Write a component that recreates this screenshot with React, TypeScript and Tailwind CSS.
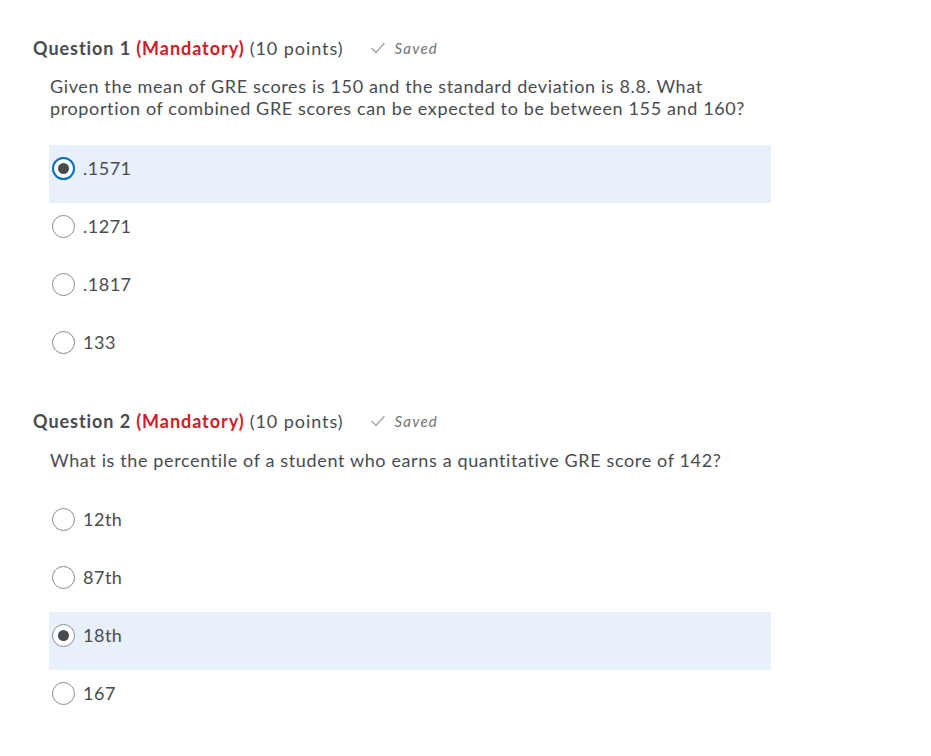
import React from 'react';

type Option = { label: string; selected?: boolean; focused?: boolean };

type Question = {
  number: number;
  points: number;
  text: string;
  options: Option[];
};

const questions: Question[] = [
  {
    number: 1,
    points: 10,
    text: 'Given the mean of GRE scores is 150 and the standard deviation is 8.8. What proportion of combined GRE scores can be expected to be between 155 and 160?',
    options: [{ label: '.1571', selected: true, focused: true }, { label: '.1271' }, { label: '.1817' }, { label: '133' }],
  },
  {
    number: 2,
    points: 10,
    text: 'What is the percentile of a student who earns a quantitative GRE score of 142?',
    options: [{ label: '12th' }, { label: '87th' }, { label: '18th', selected: true }, { label: '167' }],
  },
];

function Check() {
  return (
    <svg width="16" height="14" viewBox="0 0 16 14" className="shrink-0">
      <path d="M2 7.5 L6 11.5 L14 2.5" fill="none" stroke="#a7acaf" strokeWidth="1.6" strokeLinecap="round" strokeLinejoin="round" />
    </svg>
  );
}

function Radio({ selected, focused }: { selected?: boolean; focused?: boolean }) {
  return (
    <span
      className={`flex h-[23px] w-[23px] shrink-0 items-center justify-center rounded-full bg-white ${
        focused ? 'border-2 border-[#006fbf]' : 'border border-[#868c8f]'
      }`}
    >
      {selected && <span className="h-[11px] w-[11px] rounded-full bg-[#494c4e]" />}
    </span>
  );
}

function QuestionBlock({ q, first }: { q: Question; first: boolean }) {
  return (
    <section className={first ? '' : 'mt-[30px]'}>
      <div className="flex items-center text-[18px] leading-[28px] tracking-[0.95px]">
        <span className="font-bold text-[#494c4e]">Question {q.number}</span>
        <span className="ml-[5px] font-bold text-[#cd2026]">(Mandatory)</span>
        <span className="ml-[5px] text-[#494c4e]">({q.points} points)</span>
        <span className="ml-[26px] flex items-center gap-[9px] text-[15px] italic tracking-[1.2px] text-[#6e7477]">
          <Check />
          Saved
        </span>
      </div>
      <p
        className={`ml-[17px] w-[722px] text-[18px] leading-[22px] tracking-[0.63px] text-[#494c4e] ${
          first ? 'mt-[13px]' : 'mt-[14px]'
        }`}
      >
        {q.text}
      </p>
      <div className={`ml-[16px] w-[722px] ${first ? 'mt-[26px]' : 'mt-[25px]'}`}>
        {q.options.map((o) => (
          <div
            key={o.label}
            className={`flex h-[58px] items-start gap-[8px] pl-[3px] pt-[10px] ${o.selected ? 'bg-[#e8f1fb]' : ''}`}
          >
            <span className="flex h-[26px] items-center">
              <Radio selected={o.selected} focused={o.focused} />
            </span>
            <span className="text-[18px] leading-[26px] tracking-[0.5px] text-[#494c4e]">{o.label}</span>
          </div>
        ))}
      </div>
    </section>
  );
}

export default function App() {
  return (
    <div className="min-h-[756px] bg-white pl-[33px] pt-[34px]" style={{ fontFamily: 'Lato, "Open Sans", sans-serif' }}>
      {questions.map((q, i) => (
        <QuestionBlock key={q.number} q={q} first={i === 0} />
      ))}
    </div>
  );
}
